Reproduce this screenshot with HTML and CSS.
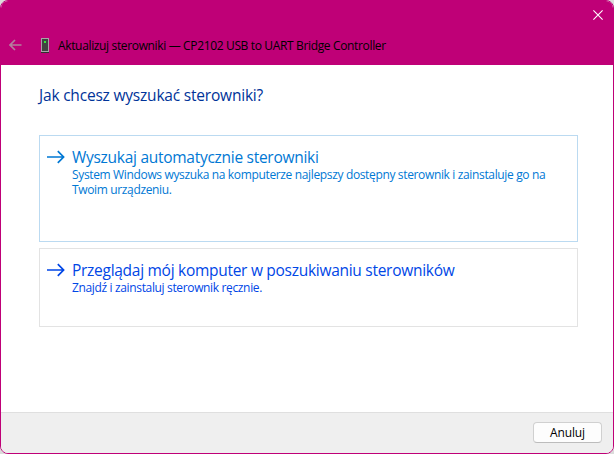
FILE: index.html
```html
<!DOCTYPE html>
<html lang="pl">
<head>
<meta charset="utf-8">
<title>Aktualizuj sterowniki</title>
<link rel="stylesheet" href="styles.css">
</head>
<body>
<div class="window">
  <header class="titlebar">
    <div class="caption">
      <button class="close" aria-label="Zamknij"><svg width="10" height="10" viewBox="0 0 10 10"><path d="M.4.4 9.6 9.6M9.6.4.4 9.6"/></svg></button>
    </div>
    <div class="nav">
      <svg class="back" width="13" height="12" viewBox="0 0 13 12"><path d="M6 1 1 6l5 5M1 6h11.5"/></svg>
      <svg class="device" width="8" height="15" viewBox="0 0 8 15"><path fill="#a8a4a6" d="M0 0h8v14H0z"/><path fill="#424242" d="M1 1h6v12H1z"/><path fill="#303030" d="M0 14h8v1H0z"/><path fill="#35e63c" d="M3 3h2v2H3z"/></svg>
      <span class="title">Aktualizuj sterowniki — CP2102 USB to UART Bridge Controller</span>
    </div>
  </header>
  <main class="content">
    <h1 class="heading">Jak chcesz wyszukać sterowniki?</h1>
    <a class="option option-auto">
      <svg class="arrow" width="18" height="14" viewBox="0 0 18 14"><path d="M0 7h16.6M10.8 1.2 16.6 7l-5.8 5.8"/></svg>
      <div class="option-text">
        <div class="option-title">Wyszukaj automatycznie sterowniki</div>
        <div class="option-desc">System Windows wyszuka na komputerze najlepszy dostępny sterownik i zainstaluje go na<br>Twoim urządzeniu.</div>
      </div>
    </a>
    <a class="option option-browse">
      <svg class="arrow" width="18" height="14" viewBox="0 0 18 14"><path d="M0 7h16.6M10.8 1.2 16.6 7l-5.8 5.8"/></svg>
      <div class="option-text">
        <div class="option-title">Przeglądaj mój komputer w poszukiwaniu sterowników</div>
        <div class="option-desc">Znajdź i zainstaluj sterownik ręcznie.</div>
      </div>
    </a>
  </main>
  <footer class="footer"><button class="cancel">Anuluj</button></footer>
</div>
</body>
</html>
```

FILE: styles.css
```css
* { box-sizing: border-box; }
body {
  margin: 0;
  background: #dcdcdc;
  font-family: "Open Sans", "Noto Sans", sans-serif;
  font-size: 12px;
  overflow: hidden;
}
.window {
  width: 614px;
  height: 454px;
  display: flex;
  flex-direction: column;
  border: 1px solid #bf0077;
  border-radius: 8px;
  overflow: hidden;
  background: #fff;
}
.titlebar { height: 64px; background: #bf0077; flex: none; }
.caption { height: 29px; display: flex; justify-content: flex-end; padding: 9px 10px 0 0; }
.close { width: 10px; height: 10px; padding: 0; border: 0; background: none; display: block; }
.close svg { display: block; stroke: #fff; stroke-width: 1.1; fill: none; }
.nav { height: 30px; display: flex; align-items: center; padding-left: 8px; }
.back { stroke: #b4809d; stroke-width: 1.7; fill: none; }
.device { margin-left: 19px; margin-top: 1px; }
.title { margin-left: 9px; margin-top: 2px; line-height: 16px; color: #000; white-space: nowrap; letter-spacing: -0.35px; }
.content { flex: 1; padding: 18px 35px 0 38px; }
.heading { margin: 0; height: 52px; font-size: 15.5px; font-weight: 400; line-height: 24px; color: #003399; letter-spacing: -0.2px; white-space: nowrap; }
.option { display: flex; width: 539px; padding: 12px 0 0 7px; border: 1px solid #e3e3e3; white-space: nowrap; }
.option-auto { height: 107px; border-color: #bbdaf1; color: #0078d4; }
.option-browse { height: 79px; margin-top: 6px; color: #0046e6; }
.arrow { flex: none; margin-top: 2px; fill: none; stroke: currentColor; stroke-width: 1.7; }
.option-text { margin-left: 7px; }
.option-title { height: 19px; line-height: 18px; font-size: 15.5px; letter-spacing: -0.28px; }
.option-desc { line-height: 15px; letter-spacing: -0.35px; }
.footer { height: 41px; flex: none; border-top: 1px solid #dfdfdf; background: #efefef; display: flex; justify-content: flex-end; padding: 9px 11px 0 0; }
.cancel { width: 69px; height: 21px; padding: 0; border: 1px solid #d0d0d0; border-bottom-color: #bcbcbc; border-radius: 4px; background: #fdfdfd; font: 12px/18px "Open Sans", "Noto Sans", sans-serif; color: #000; letter-spacing: -0.15px; }
```
